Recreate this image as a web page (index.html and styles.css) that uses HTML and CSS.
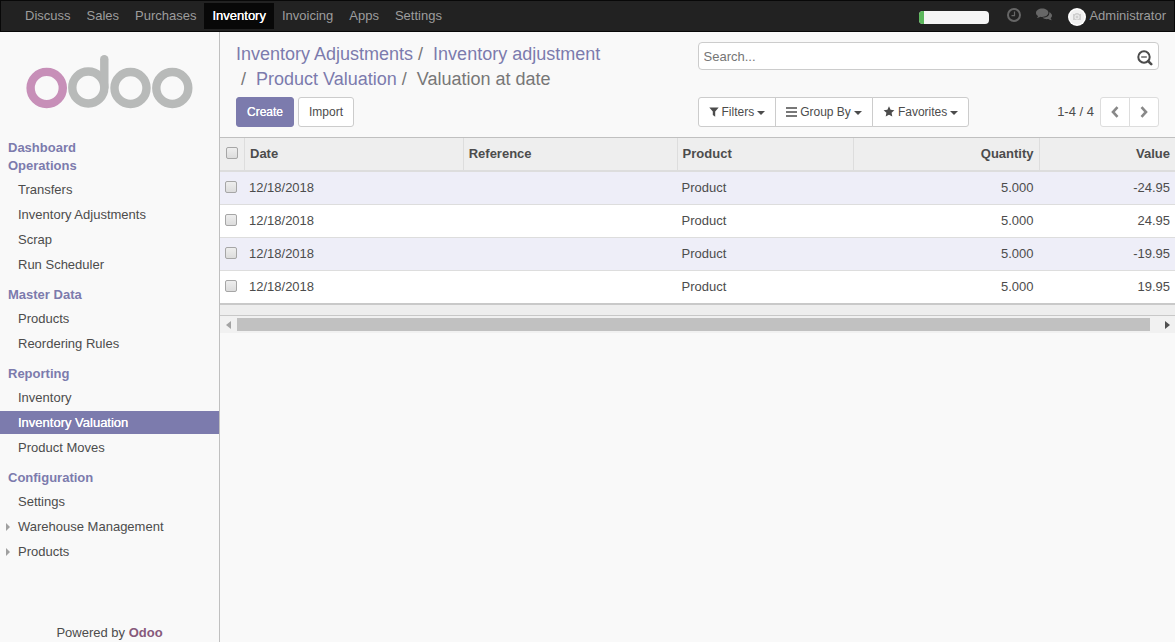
FILE: index.html
```html
<!DOCTYPE html>
<html lang="en">
<head>
<meta charset="utf-8">
<title>Valuation at date - Odoo</title>
<link rel="stylesheet" href="styles.css">
</head>
<body>
<header class="navbar">
  <nav class="apps" aria-label="Applications">
    <a href="#">Discuss</a>
    <a href="#">Sales</a>
    <a href="#">Purchases</a>
    <a href="#" class="active" aria-current="page">Inventory</a>
    <a href="#">Invoicing</a>
    <a href="#">Apps</a>
    <a href="#">Settings</a>
  </nav>
  <div class="systray">
    <div class="progress" role="progressbar" aria-label="Planner" aria-valuenow="7" aria-valuemin="0" aria-valuemax="100"><div class="progress-bar"></div></div>
    <a href="#" class="tray-clock" aria-label="Activities"><svg width="14" height="14" viewBox="0 0 14 14"><circle cx="7" cy="7" r="6" fill="none" stroke="currentColor" stroke-width="2"/><path d="M7.5 3.5v4.2H4.5" fill="none" stroke="currentColor" stroke-width="1.2"/></svg></a>
    <a href="#" class="tray-chat" aria-label="Conversations"><svg width="16" height="14" viewBox="0 0 16 14"><path d="M13.200 4.200c1.700.7 2.800 1.900 2.800 3.400 0 1-.5 1.900-1.400 2.600.2.800.7 1.400 1.300 2-1.400 0-2.600-.5-3.500-1.200-2.300.4-4.600-.1-5.900-1.400 4.200.1 7.400-2 6.700-5.400z" fill="currentColor"/><path d="M6.200.6C2.800.6 0 2.500 0 4.900c0 1.300.8 2.400 2.100 3.200-.2.700-.6 1.300-1.300 1.800 1.400 0 2.500-.5 3.400-1.200.6.100 1.300.2 2 .2 3.400 0 6.200-1.800 6.200-4.100S9.600.6 6.200.6z" fill="currentColor"/></svg></a>
    <a href="#" class="user"><svg width="18" height="18" viewBox="0 0 18 18"><circle cx="9" cy="9" r="9" fill="#fff"/><circle cx="9" cy="9" r="7.500" fill="#f1f1f1"/><path d="M5 6h2l.7-.9h2.600l.7.900h2v6H5z" fill="#cfcfcf"/><circle cx="9" cy="9" r="2" fill="#cfcfcf" stroke="#f4f4f4" stroke-width=".9"/></svg>Administrator</a>
  </div>
</header>
<div class="layout">
  <aside class="sidebar">
    <a href="#" class="logo" aria-label="Odoo"><svg width="168" height="56" viewBox="0 0 168 56" fill="none" stroke="#b8bab9" stroke-width="8.400"><circle cx="20.700" cy="34" r="16.100" stroke="#c78fb8"/><circle cx="62.300" cy="33.500" r="16"/><path d="M78.300 33.500V5.200" stroke-linecap="round"/><circle cx="104.500" cy="34" r="16"/><circle cx="146.300" cy="34" r="16"/></svg></a>
    <nav class="menu" aria-label="Inventory">
      <a href="#" class="heading">Dashboard</a>
      <h2 class="heading">Operations</h2>
      <ul>
        <li><a href="#">Transfers</a></li>
        <li><a href="#">Inventory Adjustments</a></li>
        <li><a href="#">Scrap</a></li>
        <li><a href="#">Run Scheduler</a></li>
      </ul>
      <h2 class="heading">Master Data</h2>
      <ul>
        <li><a href="#">Products</a></li>
        <li><a href="#">Reordering Rules</a></li>
      </ul>
      <h2 class="heading">Reporting</h2>
      <ul>
        <li><a href="#">Inventory</a></li>
        <li><a href="#" class="active" aria-current="page">Inventory Valuation</a></li>
        <li><a href="#">Product Moves</a></li>
      </ul>
      <h2 class="heading">Configuration</h2>
      <ul>
        <li><a href="#">Settings</a></li>
        <li><a href="#" class="toggler">Warehouse Management</a></li>
        <li><a href="#" class="toggler">Products</a></li>
      </ul>
    </nav>
    <p class="footer">Powered by <a href="#">Odoo</a></p>
  </aside>
  <main class="main">
    <div class="control-panel">
      <div class="cp-left">
        <ol class="breadcrumb">
          <li><a href="#">Inventory Adjustments</a></li>
          <li><a href="#">Inventory adjustment</a></li>
          <li><a href="#">Product Valuation</a></li>
          <li>Valuation at date</li>
        </ol>
        <div class="actions">
          <button type="button" class="btn primary">Create</button>
          <button type="button" class="btn">Import</button>
        </div>
      </div>
      <div class="cp-right">
        <div class="search">
          <input type="text" placeholder="Search..." aria-label="Search">
          <button type="button" class="search-more" aria-label="Advanced search"><svg width="16" height="16" viewBox="0 0 16 16" fill="none" stroke="#4c4c4c"><circle cx="7" cy="7" r="5.700" stroke-width="2"/><path d="M4.200 7h5.600" stroke-width="1.300"/><path d="M11.200 11.200l3 3" stroke-width="2.600" stroke-linecap="round"/></svg></button>
        </div>
        <div class="tools">
          <div class="group">
            <button type="button" class="btn"><svg width="10" height="10" viewBox="0 0 10 10"><path d="M.3.500h9.400L6.200 4.600V9.800L3.800 8V4.600z" fill="currentColor"/></svg><span>Filters</span><i class="caret"></i></button>
            <button type="button" class="btn"><svg width="11" height="10" viewBox="0 0 11 10"><path d="M0 1h11M0 5h11M0 9h11" stroke="currentColor" stroke-width="1.600"/></svg><span>Group By</span><i class="caret"></i></button>
            <button type="button" class="btn"><svg width="12" height="12" viewBox="0 0 11 12"><path d="M5.500.2l1.600 3.500 3.800.5-2.800 2.600.7 3.800-3.300-1.800-3.300 1.800.7-3.800L.1 4.200l3.800-.5z" fill="currentColor"/></svg><span>Favorites</span><i class="caret"></i></button>
          </div>
          <div class="pager">
            <span>1-4 / 4</span>
            <div class="group">
              <button type="button" class="btn" aria-label="Previous"><svg width="8" height="12" viewBox="0 0 8 12"><path d="M6.500 1.200L2 6l4.500 4.800" fill="none" stroke="#888" stroke-width="2.600"/></svg></button>
              <button type="button" class="btn" aria-label="Next"><svg width="8" height="12" viewBox="0 0 8 12"><path d="M1.500 1.200L6 6l-4.500 4.800" fill="none" stroke="#888" stroke-width="2.600"/></svg></button>
            </div>
          </div>
        </div>
      </div>
    </div>
    <table class="list">
      <colgroup><col class="c-select"><col class="c-date"><col class="c-ref"><col class="c-product"><col class="c-qty"><col></colgroup>
      <thead>
        <tr><th><input type="checkbox" aria-label="Select all"></th><th>Date</th><th>Reference</th><th>Product</th><th class="num">Quantity</th><th class="num">Value</th></tr>
      </thead>
      <tbody>
        <tr><td><input type="checkbox" aria-label="Select row 1"></td><td>12/18/2018</td><td></td><td>Product</td><td class="num">5.000</td><td class="num">-24.95</td></tr>
        <tr><td><input type="checkbox" aria-label="Select row 2"></td><td>12/18/2018</td><td></td><td>Product</td><td class="num">5.000</td><td class="num">24.95</td></tr>
        <tr><td><input type="checkbox" aria-label="Select row 3"></td><td>12/18/2018</td><td></td><td>Product</td><td class="num">5.000</td><td class="num">-19.95</td></tr>
        <tr><td><input type="checkbox" aria-label="Select row 4"></td><td>12/18/2018</td><td></td><td>Product</td><td class="num">5.000</td><td class="num">19.95</td></tr>
      </tbody>
      <tfoot><tr><td colspan="6"></td></tr></tfoot>
    </table>
    <div class="scrollbar" aria-hidden="true">
      <span class="arrow left"></span><span class="thumb"></span><span class="arrow right"></span>
    </div>
  </main>
</div>
</body>
</html>
```
FILE: styles.css
```css
* {
  box-sizing: border-box;
}

body {
  margin: 0;
  min-height: 100vh;
  display: flex;
  flex-direction: column;
  background: #f9f9f9;
  color: #4c4c4c;
  font: 13px/18px "Liberation Sans", Arial, sans-serif;
}

a {
  color: inherit;
  text-decoration: none;
}

svg {
  display: block;
  flex: none;
}

ul, ol {
  list-style: none;
  margin: 0;
  padding: 0;
}

/* Top bar */
.navbar {
  display: flex;
  justify-content: space-between;
  align-items: center;
  height: 32px;
  padding: 0 8px 0 16px;
  border: 1px solid #080808;
  background: #222;
  color: #9d9d9d;
}

.apps {
  display: flex;
}

.apps a {
  padding: 4px 8px;
}

.apps .active {
  background: #080808;
  color: #fff;
  text-shadow: 0 0 0 #fff;
}

.systray {
  display: flex;
  align-items: center;
}

.progress {
  width: 70px;
  height: 13px;
  margin: 3px 18px 0 0;
  overflow: hidden;
  border-radius: 4px;
  background: #f5f5f5;
}

.progress-bar {
  width: 7%;
  height: 100%;
  background: #5cb85c;
}

.tray-clock, .tray-chat {
  padding-bottom: 3px;
  color: #666;
}

.tray-clock {
  margin-right: 15px;
}

.tray-chat {
  margin-right: 16px;
}

.user {
  display: flex;
  align-items: center;
  gap: 3px;
}

.user svg {
  margin-top: 2px;
}

/* Left menu */
.layout {
  flex: 1;
  display: flex;
}

.sidebar {
  flex: none;
  display: flex;
  flex-direction: column;
  width: 220px;
  border-right: 1px solid #c0c0c0;
}

.logo {
  padding: 22px 0 29px 26px;
}

.menu {
  flex: 1;
}

.heading {
  display: block;
  margin: 0;
  padding-left: 8px;
  color: #7c7bad;
  font-size: 13px;
  font-weight: bold;
  line-height: 18px;
}

.menu ul {
  display: flex;
  flex-direction: column;
  gap: 2px;
  margin: 3px 0 10px;
}

.menu li a {
  display: flex;
  align-items: center;
  height: 23px;
  padding-left: 18px;
}

.menu li .active {
  background: #7c7bad;
  color: #fff;
  text-shadow: 0 0 0 #fff;
}

.menu li .toggler {
  gap: 8px;
  padding-left: 6px;
}

.toggler::before {
  content: "";
  border: 4px solid transparent;
  border-left-color: #a0a0a0;
  border-right-width: 0;
}

.footer {
  margin: 0;
  text-align: center;
}

.footer a {
  color: #875a7b;
  font-weight: bold;
}

/* Control panel */
.main {
  flex: 1;
  min-width: 0;
}

.control-panel {
  display: grid;
  grid-template-columns: 1fr 1fr;
  padding: 10px 16px;
}

.cp-left, .cp-right {
  display: flex;
  flex-direction: column;
  justify-content: space-between;
  min-width: 0;
}

.breadcrumb {
  display: flex;
  flex-wrap: wrap;
  color: #777;
  font-size: 18px;
  line-height: 25px;
  white-space: nowrap;
}

.breadcrumb a {
  color: #7c7bad;
}

.breadcrumb li + li::before {
  content: "/\00a0";
  padding: 0 5px;
}

.actions {
  display: flex;
  gap: 4px;
  margin-top: 5px;
}

.btn {
  display: flex;
  align-items: center;
  gap: 3px;
  height: 30px;
  padding: 0 10px;
  border: 1px solid #ccc;
  border-radius: 3px;
  background: #fff;
  color: #4c4c4c;
  font: 12px/18px "Liberation Sans", Arial, sans-serif;
}

.primary {
  border-color: #7c7bad;
  background: #7c7bad;
  color: #fff;
  text-shadow: 0 0 0 #fff;
}

.search {
  display: flex;
  height: 28px;
  border: 1px solid #ccc;
  border-radius: 4px;
  background: #fff;
}

.search input {
  flex: 1;
  min-width: 0;
  padding: 2px 5px 0;
  border: 0;
  background: none;
  color: inherit;
  font: inherit;
}

.search input::placeholder {
  color: #757575;
}

.search-more {
  padding: 3px 5px 0 0;
  border: 0;
  background: none;
}

.tools {
  display: flex;
  justify-content: space-between;
}

.group {
  display: flex;
}

.group .btn + .btn {
  margin-left: -1px;
}

.group .btn:first-child {
  border-radius: 3px 0 0 3px;
}

.group .btn:last-child {
  border-radius: 0 3px 3px 0;
}

.group .btn:not(:first-child):not(:last-child) {
  border-radius: 0;
}

.caret {
  margin-top: 1px;
  border: 4px solid transparent;
  border-top-color: currentColor;
  border-bottom-width: 0;
}

.pager {
  display: flex;
  align-items: center;
  gap: 6px;
}

.pager .btn {
  border-color: #ddd;
}

/* List */
.list {
  width: 100%;
  table-layout: fixed;
  border-collapse: separate;
  border-spacing: 0;
  border-top: 1px solid #c0c0c0;
  background: #fff;
}

.c-select { width: 25px; }
.c-date { width: 22.9%; }
.c-ref { width: 22.4%; }
.c-product { width: 18.5%; }
.c-qty { width: 19.4%; }

.list th, .list td {
  padding: 0 5px;
  text-align: left;
}

.list th {
  height: 34px;
  border-right: 1px solid #ddd;
  border-bottom: 2px solid #ddd;
  background: #eee;
}

.list th:last-child {
  border-right: 0;
}

.list td {
  height: 33px;
  border-bottom: 1px solid #ddd;
}

.list td + td {
  padding: 0 6px 0 4px;
}

.list td + td:last-child {
  padding-right: 5px;
}

.list tbody tr:nth-child(odd) {
  background: #eeeef8;
}

.list tbody tr:last-child td {
  height: 34px;
  border-bottom: 2px solid #c9c9c9;
}

.list tfoot td {
  height: 11px;
  border-bottom: 1px solid #c8c8c8;
  background: #eee;
}

.list .num {
  text-align: right;
}

.list input {
  appearance: none;
  display: block;
  width: 12px;
  height: 12px;
  margin: 0 0 2px;
  border: 1px solid #a6a6a6;
  border-radius: 2px;
  background: linear-gradient(#eee, #dcdcdc);
}

.list th input {
  margin-left: 1px;
}

.scrollbar {
  display: flex;
  align-items: center;
  justify-content: space-between;
  gap: 6px;
  height: 17px;
  padding: 0 5px 0 6px;
  background: #f1f1f1;
}

.thumb {
  flex: 1;
  height: 13px;
  margin-right: 9px;
  background: #c1c1c1;
}

.arrow {
  border: 4px solid transparent;
}

.arrow.left {
  border-left-width: 0;
  border-right: 5px solid #a3a3a3;
}

.arrow.right {
  border-right-width: 0;
  border-left: 5px solid #505050;
}
```
